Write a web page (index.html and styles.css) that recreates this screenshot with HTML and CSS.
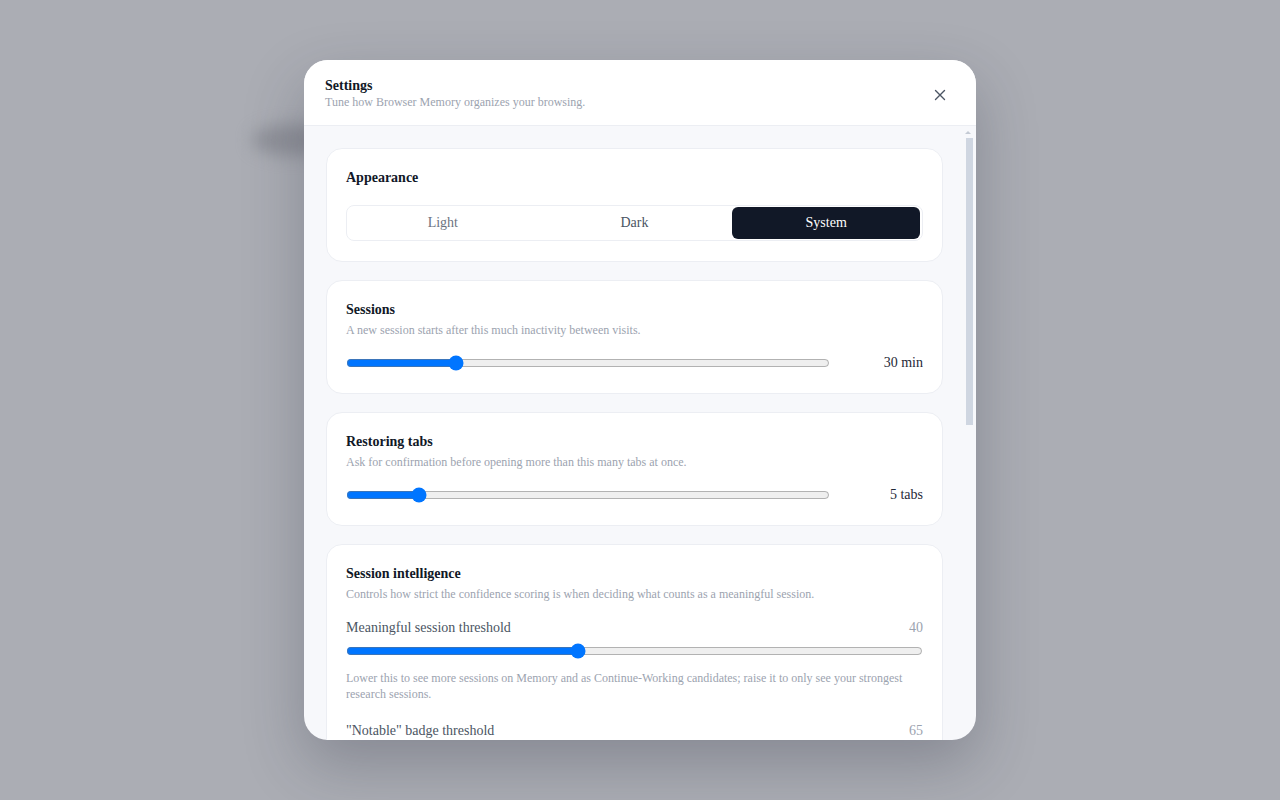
FILE: index.html
```html
<!DOCTYPE html>
<html lang="en">
<head>
    <meta charset="UTF-8">
    <meta name="viewport" content="width=device-width, initial-scale=1.0">
    <title>Settings</title>
    <link rel="stylesheet" href="styles.css">
</head>
<body>

    <div class="backdrop">
        <div class="ghost"></div>
    </div>

    <div class="modal">
        <div class="modal-header">
            <div>
                <h1>Settings</h1>
                <p class="subtitle">Tune how Browser Memory organizes your browsing.</p>
            </div>
            <button class="close" aria-label="Close">
                <svg width="12" height="12" viewBox="0 0 12 12" fill="none" stroke="#4b5563" stroke-width="1.4" stroke-linecap="round">
                    <path d="M1.5 1.5l9 9M10.5 1.5l-9 9"/>
                </svg>
            </button>
        </div>

        <div class="modal-body">
            <section class="card">
                <h2>Appearance</h2>
                <div class="segmented">
                    <button class="seg light">Light</button>
                    <button class="seg">Dark</button>
                    <button class="seg active">System</button>
                </div>
            </section>

            <section class="card">
                <h2>Sessions</h2>
                <p class="desc">A new session starts after this much inactivity between visits.</p>
                <div class="slider-row">
                    <input type="range" min="5" max="120" value="30">
                    <span class="value">30 min</span>
                </div>
            </section>

            <section class="card">
                <h2>Restoring tabs</h2>
                <p class="desc">Ask for confirmation before opening more than this many tabs at once.</p>
                <div class="slider-row">
                    <input type="range" min="1" max="30" value="5">
                    <span class="value">5 tabs</span>
                </div>
            </section>

            <section class="card">
                <h2>Session intelligence</h2>
                <p class="desc">Controls how strict the confidence scoring is when deciding what counts as a meaningful session.</p>

                <div class="field">
                    <div class="field-label">
                        <span>Meaningful session threshold</span>
                        <span class="num">40</span>
                    </div>
                    <input type="range" class="full" min="0" max="100" value="40">
                    <p class="help">Lower this to see more sessions on Memory and as Continue-Working candidates; raise it to only see your strongest research sessions.</p>
                </div>

                <div class="field">
                    <div class="field-label">
                        <span>"Notable" badge threshold</span>
                        <span class="num">65</span>
                    </div>
                    <input type="range" class="full" min="0" max="100" value="65">
                    <p class="help">Sessions scoring above this get a Notable badge in the timeline.</p>
                </div>
            </section>

            <section class="card">
                <h2>History retention</h2>
                <p class="desc">Older visits are removed automatically after this many days.</p>
                <div class="slider-row">
                    <input type="range" min="7" max="365" value="90">
                    <span class="value">90 days</span>
                </div>
            </section>

            <section class="card">
                <h2>Data</h2>
                <p class="desc">Export or clear everything Browser Memory has stored on this device.</p>
                <div class="actions">
                    <button class="btn">Export data</button>
                    <button class="btn danger">Clear all data</button>
                </div>
            </section>
        </div>

        <!-- scrollbar drawn by hand, the headless browser hides the native one -->
        <div class="scroll-arrow"></div>
        <div class="scroll-thumb"></div>
    </div>

</body>
</html>
```

FILE: styles.css
```css
* {
    box-sizing: border-box;
    margin: 0;
    padding: 0;
}

body {
    background-color: #abadb4;
    height: 100vh;
    display: flex;
    justify-content: center;
    align-items: center;
    font-family: "Liberation Serif", "Times New Roman", serif;
    color: #111827;
    overflow: hidden;
}

.backdrop {
    position: absolute;
    inset: 0;
}

.ghost {
    position: absolute;
    left: 252px;
    top: 124px;
    width: 80px;
    height: 32px;
    border-radius: 50%;
    background: #8f9199;
    filter: blur(8px);
}

.modal {
    position: relative;
    width: 672px;
    height: 680px;
    background: #f7f8fb;
    border-radius: 24px;
    overflow: hidden;
    display: flex;
    flex-direction: column;
    box-shadow: 0 24px 60px rgba(40, 44, 60, 0.28);
}

.modal-header {
    background: #ffffff;
    padding: 17px 24px 16px 21px;
    border-bottom: 1px solid #eceef3;
    display: flex;
    justify-content: space-between;
    align-items: center;
}

h1 {
    font-size: 14px;
    line-height: 18px;
    font-weight: bold;
}

.subtitle {
    font-size: 12px;
    line-height: 14px;
    color: #9ca3af;
}

.close {
    background: none;
    border: none;
    width: 24px;
    height: 24px;
    display: flex;
    align-items: center;
    justify-content: center;
    margin-top: 3px;
    cursor: pointer;
}

.modal-body {
    flex: 1;
    overflow-y: auto;
    scrollbar-width: none;
    padding: 22px 33px 24px 22px;
    display: flex;
    flex-direction: column;
    gap: 18px;
}

.scroll-arrow {
    position: absolute;
    right: 5px;
    top: 71px;
    width: 0;
    height: 0;
    border-left: 3px solid transparent;
    border-right: 3px solid transparent;
    border-bottom: 3px solid #c4cad4;
}

.scroll-thumb {
    position: absolute;
    right: 3px;
    top: 78px;
    width: 7px;
    height: 287px;
    background: #cfd6e1;
}

.card {
    background: #ffffff;
    border: 1px solid #eceef3;
    border-radius: 16px;
    padding: 20px 19px;
    flex-shrink: 0;
}

h2 {
    font-size: 14px;
    line-height: 18px;
    font-weight: bold;
    color: #111827;
}

.desc {
    font-size: 12px;
    line-height: 16px;
    color: #9ca3af;
    margin-top: 3px;
}

.segmented {
    margin-top: 18px;
    display: grid;
    grid-template-columns: repeat(3, 1fr);
    gap: 4px;
    border: 1px solid #eceef3;
    border-radius: 8px;
    padding: 1px 2px;
    height: 36px;
}

.seg {
    background: none;
    border: none;
    border-radius: 6px;
    font-family: inherit;
    font-size: 14px;
    color: #4b5563;
    cursor: pointer;
}

.seg.light {
    color: #6b7280;
}

.seg.active {
    background: #111827;
    color: #ffffff;
}

.slider-row {
    margin-top: 15px;
    height: 20px;
    display: flex;
    align-items: center;
    gap: 12px;
}

input[type="range"] {
    margin: 0;
    flex: 1;
    height: 16px;
}

input[type="range"].full {
    width: 100%;
    display: block;
}

.value {
    width: 81px;
    text-align: right;
    font-size: 14px;
    color: #1f2937;
}

.field {
    margin-top: 16px;
}

.field + .field {
    margin-top: 19px;
}

.field-label {
    display: flex;
    justify-content: space-between;
    font-size: 14px;
    line-height: 20px;
    color: #4b5563;
    margin-bottom: 5px;
}

.field-label .num {
    color: #9ca3af;
}

.help {
    font-size: 12px;
    line-height: 16px;
    color: #9ca3af;
    margin-top: 11px;
}

.actions {
    margin-top: 16px;
    display: flex;
    gap: 10px;
}

.btn {
    font-family: inherit;
    font-size: 14px;
    padding: 8px 14px;
    border-radius: 8px;
    border: 1px solid #e5e7eb;
    background: #ffffff;
    color: #374151;
    cursor: pointer;
}

.btn.danger {
    color: #dc2626;
    border-color: #fecaca;
}
```
